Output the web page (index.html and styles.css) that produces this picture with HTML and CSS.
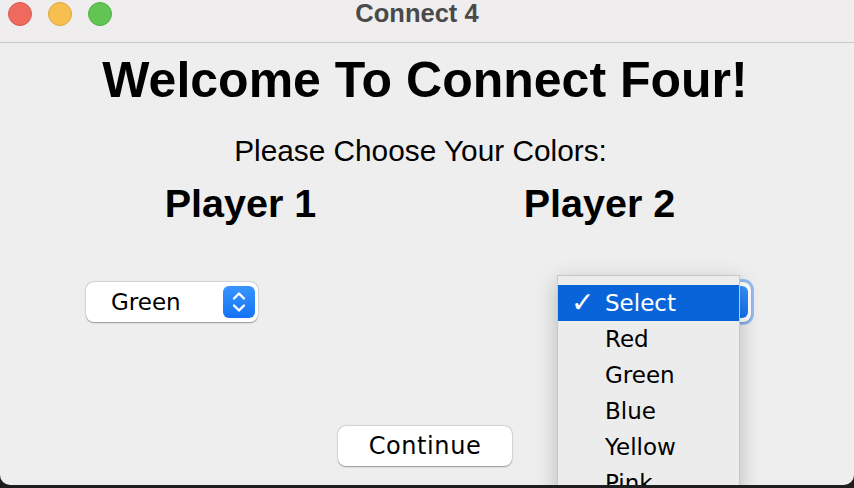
FILE: index.html
```html
<!DOCTYPE html>
<html>
<head>
<meta charset="utf-8">
<link rel="stylesheet" href="styles.css">
</head>
<body>
<div class="window">
  <div class="titlebar">
    <div class="lights">
      <span class="light red"></span>
      <span class="light yellow"></span>
      <span class="light green"></span>
    </div>
    <div class="wtitle">Connect 4</div>
  </div>
  <div class="content">
    <h1 class="headline">Welcome To Connect Four!</h1>
    <p class="subtitle">Please Choose Your Colors:</p>
    <div class="players">
      <div class="player">Player 1</div>
      <div class="player">Player 2</div>
    </div>
    <div class="combos">
      <div class="combo">
        <span class="combo-text">Green</span>
        <span class="stepper">
          <svg width="16" height="26" viewBox="0 0 16 26"><path d="M3 9.5 L8 4.5 L13 9.5 M3 16.5 L8 21.5 L13 16.5" fill="none" stroke="#fff" stroke-width="2.4" stroke-linecap="round" stroke-linejoin="round"/></svg>
        </span>
      </div>
      <div class="combo focused">
        <span class="combo-text">Select</span>
        <span class="stepper">
          <svg width="16" height="26" viewBox="0 0 16 26"><path d="M3 9.5 L8 4.5 L13 9.5 M3 16.5 L8 21.5 L13 16.5" fill="none" stroke="#fff" stroke-width="2.4" stroke-linecap="round" stroke-linejoin="round"/></svg>
        </span>
      </div>
    </div>
    <div class="actions">
      <button class="btn">Continue</button>
    </div>
  </div>
  <div class="popup">
    <div class="item selected"><span class="check">✓</span>Select</div>
    <div class="item"><span class="check"></span>Red</div>
    <div class="item"><span class="check"></span>Green</div>
    <div class="item"><span class="check"></span>Blue</div>
    <div class="item"><span class="check"></span>Yellow</div>
    <div class="item"><span class="check"></span>Pink</div>
  </div>
</div>
</body>
</html>
```

FILE: styles.css
```css
html, body {
  margin: 0;
  padding: 0;
  width: 854px;
  height: 488px;
  overflow: hidden;
  background: #1e1e1e;
}

.window {
  position: relative;
  width: 854px;
  height: 485px;
  background: #eeeeee;
  border-radius: 0 0 10px 10px;
  overflow: hidden;
  font-family: "Liberation Sans", Arial, sans-serif;
  color: #000;
}

.titlebar {
  position: relative;
  height: 42px;
  background: #efedee;
  border-bottom: 1px solid #c9c8c9;
}

.lights {
  display: flex;
  gap: 16px;
  padding: 2px 0 0 8px;
}

.light {
  width: 24px;
  height: 24px;
  border-radius: 50%;
  box-sizing: border-box;
}
.light.red { background: #ee6a5f; border: 1px solid #d85850; }
.light.yellow { background: #f6bf4f; border: 1px solid #dea63d; }
.light.green { background: #61c554; border: 1px solid #4fae45; }

.wtitle {
  position: absolute;
  top: -1px;
  left: 0;
  right: 20px;
  text-align: center;
  font-weight: bold;
  font-size: 25.5px;
  line-height: 28px;
  color: #4b4a4b;
}

.content {
  display: flex;
  flex-direction: column;
}

.headline {
  margin: 12px 0 0;
  padding-right: 4px;
  font-size: 50px;
  line-height: 50px;
  font-weight: bold;
  text-align: center;
}

.subtitle {
  margin: 32px 0 0;
  padding-right: 13px;
  font-size: 29.8px;
  line-height: 28px;
  text-align: center;
}

.players {
  display: flex;
  padding-left: 61px;
  margin-top: 19px;
}

.player {
  width: 359px;
  text-align: center;
  font-size: 39.5px;
  line-height: 39px;
  font-weight: bold;
}

.combos {
  display: flex;
  padding-left: 86px;
  gap: 321px;
  margin-top: 59px;
}

.combo {
  position: relative;
  width: 172px;
  height: 40px;
  box-sizing: border-box;
  background: #fff;
  border-radius: 8px;
  box-shadow: 0 0.5px 1.5px rgba(0,0,0,0.35), 0 0 0 0.5px rgba(0,0,0,0.08);
  display: flex;
  align-items: center;
  justify-content: space-between;
  padding: 0 3px 0 25px;
}

.combo.focused {
  box-shadow: 0 0 0 3px rgba(80,150,250,0.55), 0 0.5px 1.5px rgba(0,0,0,0.35);
}

.combo-text {
  font-family: "DejaVu Sans", "Lucida Grande", sans-serif;
  font-size: 23px;
}

.stepper {
  width: 32px;
  height: 32px;
  border-radius: 6px;
  background: linear-gradient(#3a95ff, #1373f6);
  display: flex;
  align-items: center;
  justify-content: center;
}

.actions {
  display: flex;
  justify-content: center;
  margin-top: 104px;
  padding-right: 4px;
}

.btn {
  width: 174px;
  height: 40px;
  background: #fff;
  border: none;
  border-radius: 8px;
  box-shadow: 0 0.5px 1.5px rgba(0,0,0,0.35), 0 0 0 0.5px rgba(0,0,0,0.08);
  font-family: "DejaVu Sans", "Lucida Grande", sans-serif;
  font-size: 24px;
  letter-spacing: 0.6px;
  color: #000;
  padding: 0;
}

.popup {
  position: absolute;
  left: 557px;
  top: 275px;
  width: 183px;
  height: 240px;
  box-sizing: border-box;
  padding-top: 9px;
  background: #ececec;
  border: 1px solid rgba(0,0,0,0.15);
  box-shadow: 0 6px 20px rgba(0,0,0,0.22);
}

.item {
  height: 36px;
  display: flex;
  align-items: center;
  font-family: "DejaVu Sans", "Lucida Grande", sans-serif;
  font-size: 23px;
  color: #000;
}

.item.selected {
  background: #0a64d9;
  color: #fff;
}

.check {
  width: 47px;
  padding-left: 13px;
  box-sizing: border-box;
  font-size: 28px;
  line-height: 28px;
  font-weight: bold;
}
```
